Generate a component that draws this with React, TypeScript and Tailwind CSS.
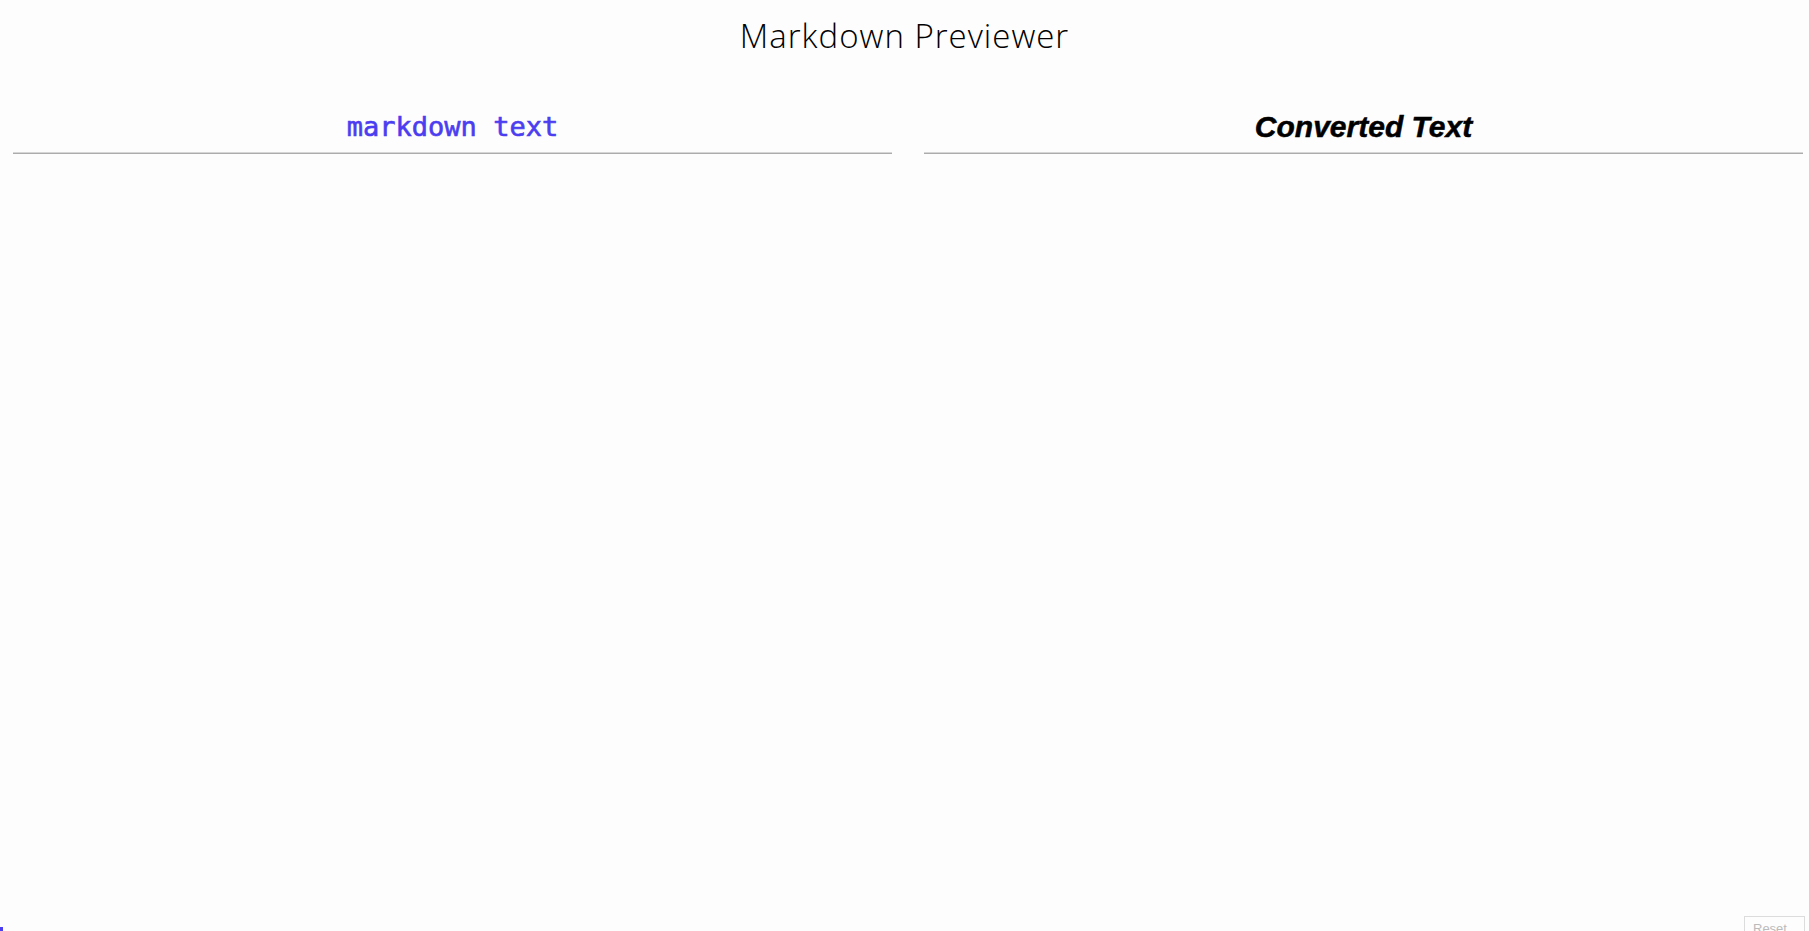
export default function App() {
  return (
    <div className="h-[931px] overflow-hidden flex flex-col bg-[#fdfdfd]">
      {/* Title */}
      <h1 className="pt-[17px] text-center text-[33px] leading-[38px] tracking-[0.03em] font-light text-black font-['Open_Sans',sans-serif]">
        Markdown Previewer
      </h1>

      {/* Two panes */}
      <div className="mt-[54px] grid grid-cols-2 gap-[32px] pl-[13px] pr-[6px]">
        <div>
          <h2 className="text-center text-[27px] leading-[36px] text-[#4b3df0] [-webkit-text-stroke:0.6px_#4b3df0] font-['DejaVu_Sans_Mono',monospace]">
            markdown text
          </h2>
          <div className="mt-[7px] border-t border-t-[#d6d6d6] border-b border-b-[#acacac]" />
        </div>
        <div>
          <h2 className="text-center text-[30px] leading-[36px] font-bold italic text-black [-webkit-text-stroke:0.5px_#000] font-['Liberation_Sans',sans-serif]">
            Converted Text
          </h2>
          <div className="mt-[7px] border-t border-t-[#d6d6d6] border-b border-b-[#acacac]" />
        </div>
      </div>

      {/* Bottom edge: start of content below the fold */}
      <div className="mt-auto flex items-end justify-between h-[15px]">
        <div className="w-[3px] h-[4px] bg-[#4b3df0]" />
        <div className="mr-[4px] w-[61px] h-[15px] border-t border-l border-r border-[#dcdcdc] px-[8px] pt-[5px] text-[13px] leading-[14px] text-[#bbb] font-['Liberation_Sans',sans-serif] overflow-hidden">
          Reset
        </div>
      </div>
    </div>
  );
}
